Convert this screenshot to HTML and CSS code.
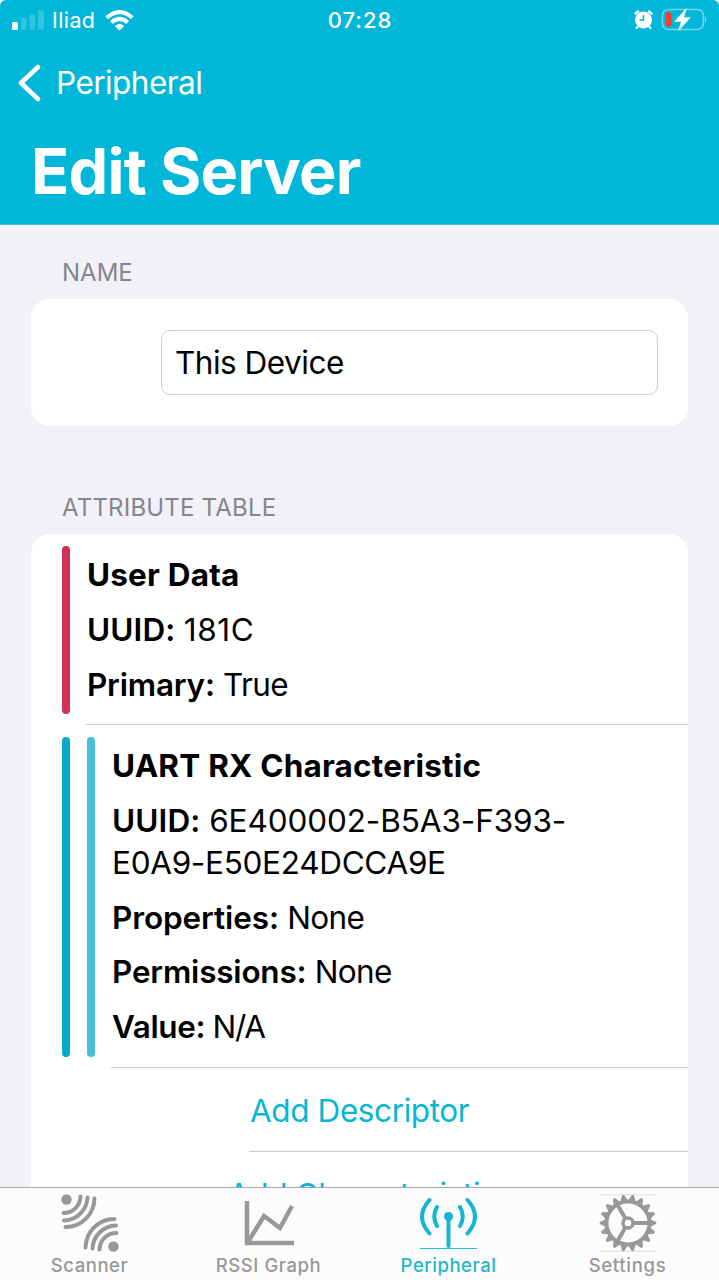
FILE: index.html
```html
<!DOCTYPE html>
<html lang="en">
<head>
<meta charset="utf-8">
<title>Edit Server</title>
<link rel="stylesheet" href="styles.css">
</head>
<body>
<div class="screen">
  <header class="header">
    <div class="status">
      <div class="status-left">
        <svg class="signal" width="32" height="20" viewBox="0 0 32 20"><rect x="0" y="12" width="6" height="8" rx="1.5" fill="#fff"/><g fill="#2fc4e0"><rect x="9" y="8" width="5.500" height="12" rx="1.500"/><rect x="17.500" y="4" width="5.500" height="16" rx="1.500"/><rect x="26" y="0" width="6" height="20" rx="1.500"/></g></svg>
        <span class="carrier">Iliad</span>
        <svg class="wifi" width="29" height="21" viewBox="0 0 29 21"><g fill="none" stroke="#fff" stroke-width="4"><path d="M1.700 7.700Q14.500 -3.600 27.300 7.700"/><path d="M6.300 12.400Q14.500 5.400 22.700 12.400"/></g><path d="M9.700 16Q14.500 12 19.300 16L14.500 20.800Z" fill="#fff"/></svg>
      </div>
      <div class="clock">07:28</div>
      <div class="status-right">
        <svg width="19" height="20" viewBox="0 0 19 20"><circle cx="9.500" cy="10" r="8.500" fill="#fff"/><path d="M1.500 3.500L4 1.500M15 1.500L17.500 3.500M3.500 17L2.500 18M15.500 17L16.500 18" stroke="#fff" stroke-width="2.400" stroke-linecap="round"/><path d="M9.500 5V10H5.500" fill="none" stroke="#00b7d9" stroke-width="1.600"/></svg>
        <svg width="47" height="24" viewBox="0 0 47 24"><rect x="1.400" y="1.500" width="41" height="20" rx="6" fill="none" stroke="#70d7e9" stroke-width="1.600"/><path d="M44 8Q47 11.500 44 15Z" fill="#70d7e9"/><rect x="4.500" y="4.500" width="6" height="14" rx="1.800" fill="#ff3b30"/><path d="M25.500 .5L13.500 13.500H20.300L17.500 22.500L29.500 9.500H22.700Z" fill="#fff" stroke="#fff" stroke-width=".5"/></svg>
      </div>
    </div>
    <div class="back">
      <svg width="24" height="38" viewBox="0 0 24 38"><path d="M21 3L4 19L21 35" fill="none" stroke="#fff" stroke-width="4.500" stroke-linecap="round" stroke-linejoin="round"/></svg>
      <span>Peripheral</span>
    </div>
    <h1 class="title">Edit Server</h1>
  </header>

  <main class="content">
    <h2 class="label label-name">NAME</h2>
    <section class="card name-card"><div class="field">This Device</div></section>
    <h2 class="label label-table">ATTRIBUTE TABLE</h2>
    <section class="card table-card">
      <div class="attr">
        <div class="bars"><i class="bar red"></i></div>
        <div class="attr-body service">
          <p class="heading">User Data</p>
          <p><b class="key-uuid">UUID:</b> <span class="short-id">181C</span></p>
          <p><b>Primary:</b> True</p>
        </div>
      </div>
      <div class="attr">
        <div class="bars"><i class="bar blue"></i><i class="bar light"></i></div>
        <div class="attr-body">
          <p class="heading">UART RX Characteristic</p>
          <p class="uuid"><b class="key-uuid">UUID:</b> 6E400002-B5A3-F393-<br><span class="uuid-tail">E0A9-E50E24DCCA9E</span></p>
          <p class="properties"><b>Properties:</b> None</p>
          <p><b>Permissions:</b> None</p>
          <p class="value"><b>Value:</b> N/A</p>
        </div>
      </div>
      <div class="action descriptor">Add Descriptor</div>
      <div class="action characteristic">Add Characteristic</div>
    </section>
  </main>

  <nav class="tabs">
    <div class="tab">
      <svg width="60" height="60" viewBox="0 0 60 60"><g fill="none" stroke="#989898" stroke-width="4" stroke-linecap="round"><g id="waves"><circle cx="6.500" cy="6.500" r="5.200" fill="#989898" stroke="none"/><path d="M20.500 3.500C20 13 13 20 3.500 20M27.500 4.500C27 17 17 27 4 27.500M34.500 5.500C34 21 22 34 5.500 34"/></g><use href="#waves" transform="rotate(180 30 30)"/></g></svg>
      <span>Scanner</span>
    </div>
    <div class="tab">
      <svg width="60" height="60" viewBox="0 0 60 60"><path d="M8 8V50H55M9 49L25 23L41 35L53 13" fill="none" stroke="#989898" stroke-width="4.500"/></svg>
      <span>RSSI Graph</span>
    </div>
    <div class="tab active">
      <svg width="60" height="60" viewBox="0 0 60 60"><path d="M1 55.500H58" stroke="#2bbdd3"/><g fill="none" stroke="#13b5d0" stroke-width="4" stroke-linecap="round"><circle cx="29.500" cy="23.500" r="4.500" fill="#13b5d0" stroke="none"/><path d="M29.500 24V53"/><path d="M18 14Q12.500 23.500 18 33M41 14Q46.500 23.500 41 33M10.500 7Q-4.500 23.500 10.500 40.500M48.500 7Q63.500 23.500 48.500 40.500"/></g></svg>
      <span>Peripheral</span>
    </div>
    <div class="tab settings">
      <svg width="60" height="60" viewBox="0 0 60 60"><path d="M3 1.800H58M3 58.200H58" stroke="#ddd"/><g fill="none" stroke="#989898" stroke-width="4"><circle cx="30" cy="30" r="21.500"/><circle cx="30" cy="30" r="5" stroke-width="3.500"/><path d="M35 30H52M27.500 25.700L19 11M27.500 34.300L19 49"/></g>
        <g fill="#989898" stroke="#989898" stroke-width="1" stroke-linejoin="round"><g id="teeth"><path id="tooth" d="M52.500 27L57.800 29.200V30.800L52.500 33Z"/><use href="#tooth" transform="rotate(20 30 30)"/><use href="#tooth" transform="rotate(40 30 30)"/><use href="#tooth" transform="rotate(60 30 30)"/><use href="#tooth" transform="rotate(80 30 30)"/><use href="#tooth" transform="rotate(100 30 30)"/></g><use href="#teeth" transform="rotate(120 30 30)"/><use href="#teeth" transform="rotate(240 30 30)"/></g></svg>
      <span>Settings</span>
    </div>
  </nav>
</div>
</body>
</html>
```
FILE: styles.css
```css
* { box-sizing: border-box; margin: 0; padding: 0; }
body { background: #fff; font-family: Inter, "Liberation Sans", sans-serif; }
svg { display: block; flex: none; }
.screen { width: 719px; height: 1280px; display: flex; flex-direction: column; overflow: hidden; background: #f2f1f8; }

.header { flex: none; height: 225px; background: #00b7d9; color: #fff; border-bottom: 1px solid #4fb9cb; border-radius: 6px 6px 0 0; }
.status { height: 40px; display: grid; grid-template-columns: 1fr auto 1fr; align-items: center; padding: 0 11px 0 12px; font-size: 21.500px; }
.status-left, .status-right { display: flex; align-items: center; }
.signal { margin-right: 8px; }
.carrier { letter-spacing: .4px; margin-right: 10px; }
.clock { font-weight: 500; font-size: 22px; letter-spacing: 1px; }
.status-right { justify-content: flex-end; gap: 8px; }
.back { height: 85px; display: flex; align-items: center; gap: 15px; padding-left: 17px; font-size: 31.500px; letter-spacing: -.55px; }
.title { font-size: 63px; font-weight: 700; line-height: 76px; padding: 8px 0 0 31px; letter-spacing: -.8px; }

.content { flex: 1; min-height: 0; overflow: hidden; padding: 0 31px; }
.label { font-size: 24px; font-weight: 400; line-height: 30px; color: #85858b; padding-left: 31px; }
.label-name { margin-top: 33px; }
.label-table { margin-top: 67px; letter-spacing: .2px; }
.card { background: #fff; border-radius: 19px; }
.name-card { margin-top: 11px; height: 127px; display: flex; align-items: center; justify-content: flex-end; padding-right: 30px; }
.field { width: 497px; height: 65px; border: 1px solid #cdcdcf; border-radius: 9px; padding-left: 13px; font-size: 31.500px; letter-spacing: -.5px; line-height: 64px; }
.table-card { margin-top: 11px; height: 720px; font-size: 31.500px; line-height: 42px; letter-spacing: -.6px; }

.attr { display: flex; padding-left: 31px; }
.bars { display: flex; gap: 17px; padding: 12px 16px 11px 0; }
.bar { width: 8px; border-radius: 4px; }
.red { background: #d13254; }
.blue { background: #05a9cc; }
.light { background: #48bed8; }
.attr-body { flex: 1; display: flex; flex-direction: column; gap: 12.800px; padding: 20px 0 19px 1px; border-bottom: 1px solid #c9c9cc; }
.service { padding-bottom: 18.400px; }
.attr b { font-weight: 600; letter-spacing: -.2px; }
.attr .key-uuid { letter-spacing: .1px; }
.heading { font-weight: 650; letter-spacing: .2px; }
.uuid { letter-spacing: -.1px; }
.uuid-tail { letter-spacing: -.3px; }
.short-id { letter-spacing: .7px; }
.properties b { letter-spacing: -.1px; }
.value { letter-spacing: -1.300px; }
.value b { letter-spacing: -.4px; }
.action { color: #08b5d5; margin-left: 218px; padding-left: 1px; border-bottom: 1px solid #c9c9cc; height: 84px; line-height: 85px; letter-spacing: -.4px; }
.characteristic { margin-left: 196px; border: 0; }

.tabs { flex: none; height: 93px; display: flex; background: #fcfcfc; border-top: 1px solid #a7a7aa; }
.tab { flex: 1 1 0; display: flex; flex-direction: column; align-items: center; padding-top: 5px; font-size: 18.500px; font-weight: 500; line-height: 24px; color: #989898; letter-spacing: .55px; }
.active { color: #1fb7c9; padding-left: 1px; }
.settings { padding-right: 2px; letter-spacing: .7px; }
```
